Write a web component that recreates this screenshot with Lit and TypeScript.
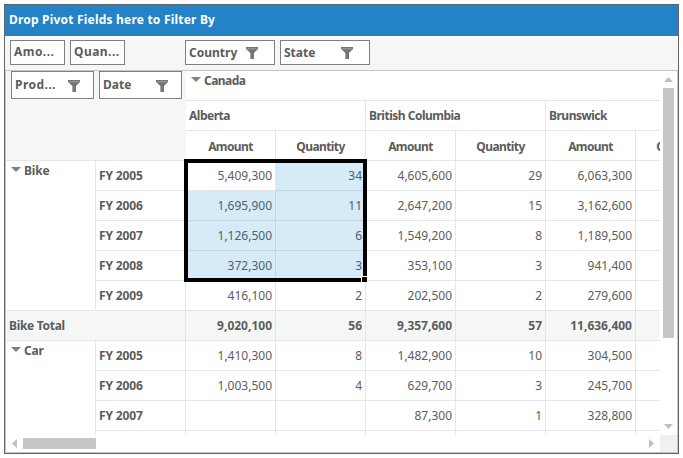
import { LitElement, html, css, svg, nothing } from "lit";
import { customElement, property } from "lit/decorators.js";
import { classMap } from "lit/directives/class-map.js";

interface Row {
  group?: string;
  span?: number;
  label: string;
  total?: boolean;
  values: string[];
}

const ROWS: Row[] = [
  { group: "Bike", span: 5, label: "FY 2005", values: ["5,409,300", "34", "4,605,600", "29", "6,063,300", ""] },
  { label: "FY 2006", values: ["1,695,900", "11", "2,647,200", "15", "3,162,600", ""] },
  { label: "FY 2007", values: ["1,126,500", "6", "1,549,200", "8", "1,189,500", ""] },
  { label: "FY 2008", values: ["372,300", "3", "353,100", "3", "941,400", ""] },
  { label: "FY 2009", values: ["416,100", "2", "202,500", "2", "279,600", ""] },
  { label: "Bike Total", total: true, values: ["9,020,100", "56", "9,357,600", "57", "11,636,400", ""] },
  { group: "Car", span: 4, label: "FY 2005", values: ["1,410,300", "8", "1,482,900", "10", "304,500", ""] },
  { label: "FY 2006", values: ["1,003,500", "4", "629,700", "3", "245,700", ""] },
  { label: "FY 2007", values: ["", "", "87,300", "1", "328,800", ""] },
  { label: "", values: ["", "", "", "", "", ""] },
];

const expander = html`<svg class="exp" width="10" height="5" viewBox="0 0 10 5">
  ${svg`<path d="M0 0H10L5 5Z" fill="#808080"/>`}
</svg>`;

@customElement("field-button")
export class FieldButton extends LitElement {
  @property() label = "";
  @property({ type: Boolean }) filter = false;

  static styles = css`
    :host {
      box-sizing: border-box;
      display: flex;
      justify-content: space-between;
      border: 1px solid #7f7f7f;
      background: #fff;
      padding: 0 13px 0 3px;
      line-height: 22px;
      white-space: nowrap;
    }
    .cut {
      letter-spacing: 0.45px;
    }
    svg {
      display: block;
      margin-top: var(--funnel-top, 6px);
      flex: none;
    }
  `;

  render() {
    return html`<span class=${classMap({ cut: this.label.endsWith("...") })}>${this.label}</span>${this.filter
        ? html`<svg width="12" height="12" viewBox="0 0 12 12">
            <path d="M0 0H12V2L8 6V12H4.4V6L0 2Z" fill="#747474" />
            <path d="M1 1.8H11" stroke="#b4b4b4" stroke-width=".7" />
            <path d="M4.6 6V12" stroke="#aaa" stroke-width=".8" />
          </svg>`
        : nothing}`;
  }
}

@customElement("app-root")
export class AppRoot extends LitElement {
  static styles = css`
    :host {
      display: block;
      box-sizing: border-box;
      width: 683px;
      height: 458px;
      padding: 4px;
      background: #fff;
      color: #5c5c5c;
      font: 12px/30px "Noto Sans", "Open Sans", sans-serif;
      overflow: hidden;
    }
    * {
      box-sizing: border-box;
    }
    .frame {
      width: 675px;
      height: 450px;
      border: 1px solid #636363;
      display: flex;
      flex-direction: column;
    }
    .filterbar {
      height: 31px;
      flex: none;
      background: #2482c6;
      color: #fff;
      font-weight: 700;
      padding-left: 4px;
      line-height: 30px;
      letter-spacing: 0.2px;
    }
    .fields {
      height: 32px;
      flex: none;
      margin-top: 2px;
      padding: 2px 0 0 5px;
      display: flex;
      background: #f5f7f7;
      font-weight: 700;
    }
    .fields field-button {
      height: 25px;
      width: 55px;
      margin-right: 5px;
    }
    .fields field-button[filter] {
      width: 90px;
      padding-right: 16px;
      line-height: 23px;
    }
    .fields .lead {
      width: 175px;
      display: flex;
    }
    .box {
      flex: 1;
      min-height: 0;
      border: 1px solid #c6c6c6;
      display: grid;
      grid-template: 364px 17px / 654px 17px;
    }
    .view {
      position: relative;
      overflow: hidden;
    }
    .grid {
      display: grid;
      grid-template-columns: repeat(8, 90px);
      grid-auto-rows: 30px;
    }
    .corner {
      grid-area: 1 / 1 / 4 / 3;
      background: #f5f7f7;
      border-bottom: 1px solid #e6e6e6;
      display: flex;
      align-items: flex-start;
      gap: 5px;
      padding-left: 5px;
      font-weight: 700;
    }
    .corner field-button {
      width: 83px;
      height: 28px;
      line-height: 26px;
      --funnel-top: 8px;
    }
    .cell {
      border: solid #e6e6e6;
      border-width: 0 1px 1px 0;
      white-space: nowrap;
      overflow: hidden;
    }
    .head {
      font-weight: 700;
      padding-left: 3px;
      letter-spacing: -0.15px;
    }
    .head.total {
      letter-spacing: -0.3px;
    }
    .head.wide:not(.total) {
      letter-spacing: -0.5px;
    }
    .wide {
      grid-column: span 2;
    }
    .head.country,
    .head.group {
      line-height: 20px;
      padding-left: 5px;
      letter-spacing: -0.55px;
    }
    .head.group {
      letter-spacing: -0.2px;
    }
    .country {
      grid-column: span 6;
    }
    .head.mid {
      text-align: center;
      padding: 0;
      letter-spacing: -0.6px;
      line-height: 31px;
    }
    .num {
      text-align: right;
      padding-right: 3px;
    }
    .exp {
      vertical-align: middle;
      margin: -4px 3px 0 0;
    }
    .total {
      background: #f5f7f7;
      font-weight: 700;
    }
    .selection {
      position: absolute;
      left: 178px;
      top: 88px;
      width: 183px;
      height: 123px;
      border: 4px solid #000;
    }
    .tint {
      height: 100%;
      background: rgba(0, 122, 204, 0.16);
      clip-path: polygon(88px 0, 100% 0, 100% 100%, 0 100%, 0 28px, 88px 28px);
    }
    .handle {
      position: absolute;
      right: -4px;
      bottom: -4px;
      width: 6px;
      height: 6px;
      background: #000;
      border: solid #fff;
      border-width: 1px 0 0 1px;
    }
    .vbar {
      display: flex;
      flex-direction: column;
      align-items: center;
      padding: 6px 0 6px;
    }
    .vthumb {
      width: 11px;
      height: 250px;
      margin: 6px 0 auto;
      background: #c6c6c6;
    }
    .hbar {
      display: flex;
      align-items: center;
      padding: 0 6px 0 6px;
    }
    .hthumb {
      width: 73px;
      height: 11px;
      margin: 0 auto 0 6px;
      background: #c6c6c6;
    }
    .grip {
      background: #f0f0f0;
    }
    .arrow {
      display: block;
      flex: none;
      fill: #c0c0c0;
    }
  `;

  private renderRow(row: Row) {
    return html`
      ${row.group
        ? html`<div class="cell head group" style="grid-row: span ${row.span}">${expander}${row.group}</div>`
        : nothing}
      <div class=${classMap({ cell: true, head: true, total: !!row.total, wide: !!row.total })}>${row.label}</div>
      ${row.values.map(
        (v) => html`<div class=${classMap({ cell: true, num: true, total: !!row.total })}>${v}</div>`
      )}
    `;
  }

  render() {
    return html`
      <div class="frame">
        <div class="filterbar">Drop Pivot Fields here to Filter By</div>
        <div class="fields">
          <div class="lead">
            <field-button label="Amo..."></field-button>
            <field-button label="Quan..."></field-button>
          </div>
          <field-button label="Country" filter></field-button>
          <field-button label="State" filter></field-button>
        </div>
        <div class="box">
          <div class="view">
            <div class="grid">
              <div class="corner">
                <field-button label="Prod..." filter></field-button>
                <field-button label="Date" filter></field-button>
              </div>
              <div class="cell head country">${expander}Canada</div>
              ${["Alberta", "British Columbia", "Brunswick"].map(
                (s) => html`<div class="cell head wide">${s}</div>`
              )}
              ${[0, 1, 2].map(
                () => html`<div class="cell head mid">Amount</div>
                  <div class="cell head mid">Quantity</div>`
              )}
              ${ROWS.map((r) => this.renderRow(r))}
            </div>
            <div class="selection">
              <div class="tint"></div>
              <div class="handle"></div>
            </div>
          </div>
          <div class="vbar">
            <svg class="arrow" width="9" height="5" viewBox="0 0 9 5"><path d="M0 5L4.5 0L9 5Z" /></svg>
            <div class="vthumb"></div>
            <svg class="arrow" width="9" height="5" viewBox="0 0 9 5"><path d="M0 0H9L4.5 5Z" /></svg>
          </div>
          <div class="hbar">
            <svg class="arrow" width="5" height="9" viewBox="0 0 5 9"><path d="M5 0V9L0 4.5Z" /></svg>
            <div class="hthumb"></div>
            <svg class="arrow" width="5" height="9" viewBox="0 0 5 9"><path d="M0 0V9L5 4.5Z" /></svg>
          </div>
          <div class="grip"></div>
        </div>
      </div>
    `;
  }
}
